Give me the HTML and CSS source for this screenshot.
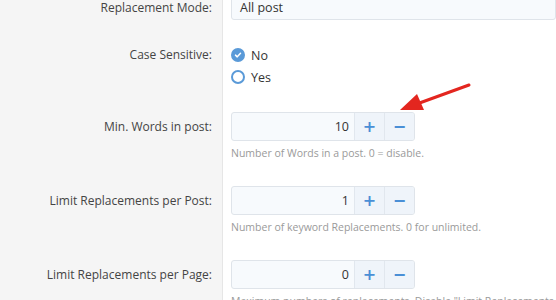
FILE: index.html
```html
<!DOCTYPE html>
<html lang="en">
<head>
    <meta charset="UTF-8">
    <meta name="viewport" content="width=device-width, initial-scale=1.0">
    <title>Replacement Settings</title>
    <link rel="stylesheet" href="styles.css">
</head>
<body>
    <div class="settings">
        <div class="row row-first">
            <div class="label">Replacement Mode:</div>
            <div class="field">
                <div class="select">All post</div>
            </div>
        </div>

        <div class="row">
            <div class="label label-radio">Case Sensitive:</div>
            <div class="field">
                <label class="radio">
                    <span class="radio-mark checked">
                        <svg viewBox="0 0 12 12" width="12" height="12"><path d="M3 6.2 L5.1 8.2 L9 4" fill="none" stroke="#fff" stroke-width="1.8" stroke-linecap="round" stroke-linejoin="round"/></svg>
                    </span>
                    No
                </label>
                <label class="radio">
                    <span class="radio-mark"></span>
                    Yes
                </label>
            </div>
        </div>

        <div class="row">
            <div class="label">Min. Words in post:</div>
            <div class="field">
                <div class="spinner">
                    <input type="text" class="spinner-value" value="10">
                    <button type="button" class="spinner-btn">+</button>
                    <button type="button" class="spinner-btn">&minus;</button>
                </div>
                <p class="help">Number of Words in a post. 0 = disable.</p>
            </div>
        </div>

        <div class="row">
            <div class="label">Limit Replacements per Post:</div>
            <div class="field">
                <div class="spinner">
                    <input type="text" class="spinner-value" value="1">
                    <button type="button" class="spinner-btn">+</button>
                    <button type="button" class="spinner-btn">&minus;</button>
                </div>
                <p class="help">Number of keyword Replacements. 0 for unlimited.</p>
            </div>
        </div>

        <div class="row">
            <div class="label">Limit Replacements per Page:</div>
            <div class="field">
                <div class="spinner">
                    <input type="text" class="spinner-value" value="0">
                    <button type="button" class="spinner-btn">+</button>
                    <button type="button" class="spinner-btn">&minus;</button>
                </div>
                <p class="help">Maximum numbers of replacements. Disable "Limit Replacements per Post".</p>
            </div>
        </div>
    </div>

    <!-- annotation arrow pointing at the minus button -->
    <svg class="arrow" width="556" height="300" viewBox="0 0 556 300">
        <line x1="469" y1="85" x2="414" y2="105" stroke="#e3261f" stroke-width="3" stroke-linecap="round"/>
        <polygon points="400,110 417,94 424,110" fill="#e3261f"/>
    </svg>
</body>
</html>
```

FILE: styles.css
```css
body {
    margin: 0;
    height: 100vh;
    overflow: hidden;
    background-color: #fff;
    font-family: "Open Sans", "Noto Sans", sans-serif;
    font-size: 12px;
    color: #444;
}

.settings {
    margin-top: -21px;
}

.row {
    display: flex;
}

.label {
    width: 212px;
    flex-shrink: 0;
    padding: 12px 10px 12px 0;
    background-color: #f5f5f5;
    border-right: 1px solid #e6e6e6;
    text-align: right;
    line-height: 29px;
}

.row-first .label {
    padding-top: 14px;
    padding-bottom: 10px;
}

.label-radio {
    line-height: 22px;
}

.field {
    flex: 1;
    padding: 12px 0 12px 8px;
}

.select {
    height: 27px;
    line-height: 31px;
    padding: 0 8px;
    border: 1px solid #dfe4ea;
    border-radius: 3px;
    background-color: #f7fafd;
    font-size: 12.5px;
    color: #333;
}

.radio {
    display: flex;
    align-items: center;
    gap: 6px;
    height: 22px;
    font-size: 12.5px;
    color: #333;
}

.radio-mark {
    display: flex;
    align-items: center;
    justify-content: center;
    width: 10px;
    height: 10px;
    border: 2px solid #5a9ad8;
    border-radius: 50%;
    background-color: #fff;
}

.radio-mark.checked {
    background-color: #5a9ad8;
}

.spinner {
    display: flex;
    width: 182px;
    height: 27px;
    border: 1px solid #dfe4ea;
    border-radius: 3px;
    background-color: #f7fafd;
    overflow: hidden;
}

.spinner-value {
    width: 0;
    flex: 1;
    border: none;
    background: transparent;
    padding: 0 5px;
    text-align: right;
    font-family: inherit;
    font-size: 12.5px;
    color: #333;
    outline: none;
}

.spinner-btn {
    width: 30px;
    border: none;
    border-left: 1px solid #e1e7ee;
    background-color: #eff4fa;
    color: #4a8fd6;
    font-family: "DejaVu Sans", sans-serif;
    font-size: 16px;
    font-weight: bold;
    padding: 0;
    cursor: pointer;
}

.help {
    margin: 4px 0 0;
    line-height: 17px;
    font-size: 10.5px;
    color: #9a9a9a;
}

.arrow {
    position: absolute;
    top: 0;
    left: 0;
    pointer-events: none;
}
```
